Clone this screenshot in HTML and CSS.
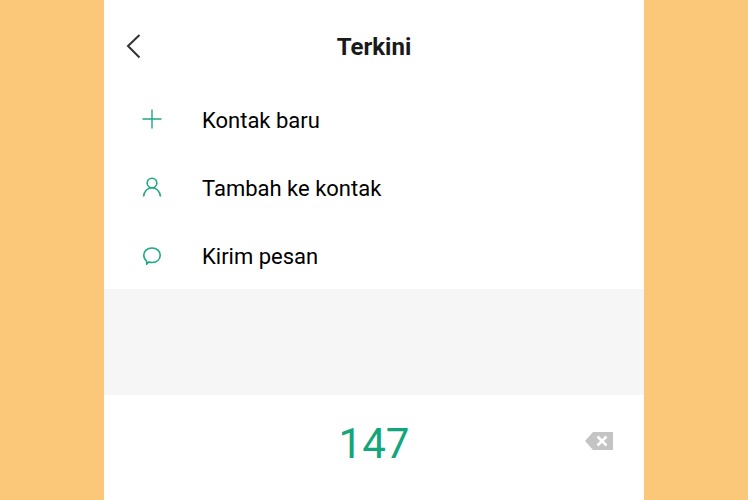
FILE: index.html
```html
<!DOCTYPE html>
<html lang="en">
<head>
    <meta charset="UTF-8">
    <title>Terkini</title>
    <link rel="stylesheet" href="styles.css">
</head>
<body>
    <div class="phone">
        <header class="top-bar">
            <svg class="back" width="16" height="26" viewBox="0 0 16 26">
                <path d="M13.5 2 L2 13 L13.5 24.500" fill="none" stroke="#333" stroke-width="2"/>
            </svg>
            <h1>Terkini</h1>
        </header>
        <ul class="actions">
            <li>
                <span class="icon">
                    <svg width="20" height="20" viewBox="0 0 20 20">
                        <path d="M0.5 10 H19.5 M10 0.5 V19.5" fill="none" stroke="#1fa883" stroke-width="1.4"/>
                    </svg>
                </span>
                Kontak baru
            </li>
            <li>
                <span class="icon">
                    <svg width="20" height="20" viewBox="0 0 20 20">
                        <circle cx="10" cy="6" r="4.800" fill="none" stroke="#1fa883" stroke-width="1.6"/>
                        <path d="M1.500 19.500 C2 14.500 5.500 10.800 10 10.800 C14.500 10.800 18 14.500 18.500 19.500" fill="none" stroke="#1fa883" stroke-width="1.6"/>
                    </svg>
                </span>
                Tambah ke kontak
            </li>
            <li>
                <span class="icon">
                    <svg width="20" height="20" viewBox="0 -1.500 20 20">
                        <path d="M10 1.500 C15 1.500 18.200 4.800 18.200 8.800 C18.200 13 15 16 10 16 C8.800 16 7.800 15.900 6.800 15.500 L4.800 17.500 L4.500 14.300 C2.800 13 1.800 11 1.800 8.800 C1.800 4.800 5 1.500 10 1.500 Z" fill="none" stroke="#1fa883" stroke-width="1.6"/>
                    </svg>
                </span>
                Kirim pesan
            </li>
        </ul>
        <div class="spacer"></div>
        <footer class="dial">
            <span class="number">147</span>
            <svg class="del" width="30" height="20" viewBox="0 0 30 20">
                <path d="M9 1 H29 V19 H9 L1 10 Z" fill="#c4c4c4"/>
                <path d="M13.500 5.500 L22.500 14.500 M22.500 5.500 L13.500 14.500" fill="none" stroke="#fff" stroke-width="2.6"/>
            </svg>
        </footer>
    </div>
</body>
</html>
```

FILE: styles.css
```css
html, body {
    height: 100%;
}

body {
    margin: 0;
    background-color: #fac878;
    font-family: Roboto, "Noto Sans", sans-serif;
}

.phone {
    width: 540px;
    height: 500px;
    margin: 0 auto;
    background-color: #fff;
    display: flex;
    flex-direction: column;
}

.top-bar {
    position: relative;
    height: 85px;
    display: flex;
    align-items: center;
    justify-content: center;
    flex-shrink: 0;
    padding-top: 9px;
    box-sizing: border-box;
}

.top-bar h1 {
    margin: 0;
    font-size: 24px;
    font-weight: 700;
    color: #1a1a1a;
}

.back {
    position: absolute;
    left: 22px;
    top: 33px;
}

.actions {
    list-style: none;
    margin: 0;
    padding: 0;
}

.actions li {
    height: 68px;
    display: flex;
    align-items: center;
    font-size: 22px;
    color: #000;
    padding-top: 2px;
    box-sizing: border-box;
}

.icon {
    width: 20px;
    height: 20px;
    margin-left: 38px;
    margin-right: 40px;
    margin-bottom: 2px;
    display: flex;
}

.spacer {
    height: 106px;
    background-color: #f6f6f6;
}

.dial {
    position: relative;
    flex: 1;
    display: flex;
    align-items: center;
    justify-content: center;
    padding-bottom: 8px;
    box-sizing: border-box;
}

.number {
    font-size: 42px;
    color: #12a67c;
}

.del {
    position: absolute;
    right: 30px;
    top: 36px;
}
```
